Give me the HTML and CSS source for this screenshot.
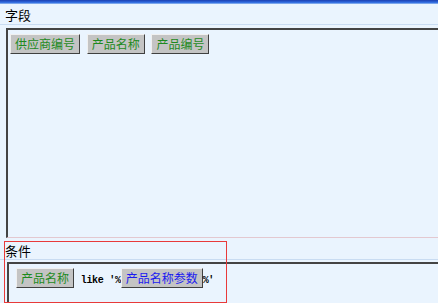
FILE: index.html
```html
<!DOCTYPE html>
<html lang="zh-CN">

<head>
    <meta charset="UTF-8">
    <meta name="viewport" content="width=device-width, initial-scale=1.0">
    <title>查询设置</title>
    <link rel="stylesheet" href="styles.css">
</head>

<body>
    <div class="top-bar"></div>

    <div class="section-title">字段</div>
    <div class="field-box">
        <span class="field-btn">供应商编号</span>
        <span class="field-btn">产品名称</span>
        <span class="field-btn">产品编号</span>
    </div>

    <div class="cond-section">
        <div class="section-title cond-title">条件</div>
        <div class="cond-box">
            <span class="field-btn">产品名称</span>
            <span class="cond-text">like '%</span><span class="field-btn param">产品名称参数</span><span class="cond-text">%'</span>
        </div>
        <div class="highlight"></div>
    </div>
</body>

</html>
```

FILE: styles.css
```css
* {
    box-sizing: border-box;
}

body {
    margin: 0;
    height: 303px;
    overflow: hidden;
    background-color: #eaf4fe;
    font-family: "Noto Sans CJK SC", "Liberation Sans", sans-serif;
    font-size: 12px;
    color: #000;
}

.top-bar {
    height: 4px;
    background: linear-gradient(#1c3fb0, #2f6ae0 60%, #9cc0f0);
}

.section-title {
    height: 21px;
    padding-left: 5px;
    line-height: 21px;
    font-size: 13px;
    border-bottom: 1px solid #c9dcf2;
}

.field-box {
    height: 210px;
    margin: 3px 0 0 6px;
    padding: 3px 2px;
    border-top: 2px solid #444;
    border-left: 2px solid #444;
    border-bottom: 1px solid #e3c8d0;
}

.field-btn {
    display: inline-block;
    height: 20px;
    margin-right: 4px;
    padding: 0 4px;
    line-height: 17px;
    background-color: #c4c4c4;
    border: 1px solid;
    border-color: #f0f0f0 #404040 #404040 #f0f0f0;
    color: #1e8a1e;
    vertical-align: middle;
}

.cond-section {
    position: relative;
    margin-top: 3px;
}

.cond-title {
    height: 19px;
    line-height: 20px;
}

.cond-box {
    height: 45px;
    margin: 2px 0 0 7px;
    padding: 3px 7px;
    border-top: 2px solid #444;
    border-left: 2px solid #444;
}

.cond-text {
    display: inline-block;
    margin-top: 5px;
    font-family: "Liberation Mono", monospace;
    font-size: 10px;
    font-weight: bold;
    letter-spacing: -0.3px;
    vertical-align: middle;
}

.cond-box .param {
    margin-right: 0;
    color: #1a1af0;
}

.highlight {
    position: absolute;
    left: 4px;
    top: 0;
    width: 223px;
    height: 62px;
    border: 1px solid #e83a3a;
}
```
